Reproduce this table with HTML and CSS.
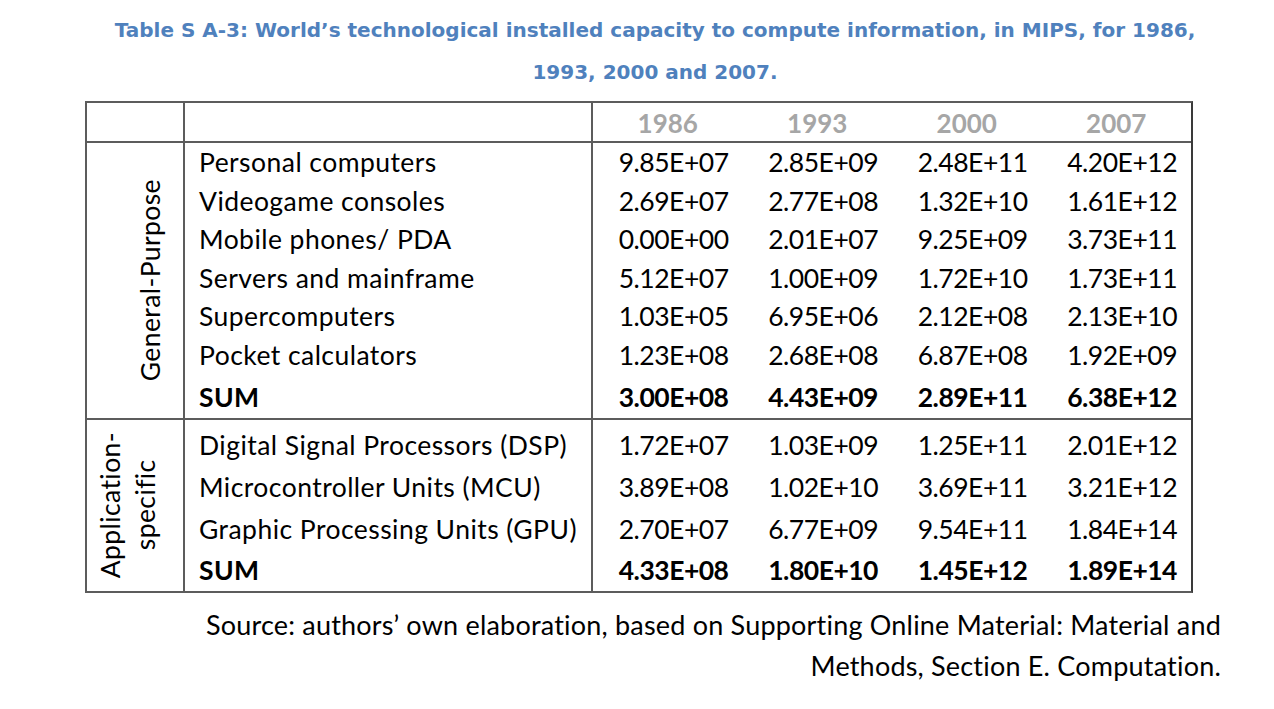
FILE: index.html
```html
<!DOCTYPE html>
<html>
<head>
<meta charset="utf-8">
<link rel="stylesheet" href="styles.css">
</head>
<body>
<div class="page">
  <h1 class="title">Table S A-3: World’s technological installed capacity to compute information, in MIPS, for 1986,<br>1993, 2000 and 2007.</h1>
  <div class="table">
    <div class="row head">
      <div class="c-group"></div>
      <div class="c-label"></div>
      <div class="c-data">
        <span class="year">1986</span><span class="year">1993</span><span class="year">2000</span><span class="year">2007</span>
      </div>
    </div>
    <div class="section s1">
      <div class="c-group"><span class="vlabel">General-Purpose</span></div>
      <div class="c-label">
        <div class="r">Personal computers</div>
        <div class="r">Videogame consoles</div>
        <div class="r">Mobile phones/ PDA</div>
        <div class="r">Servers and mainframe</div>
        <div class="r">Supercomputers</div>
        <div class="r">Pocket calculators</div>
        <div class="r sum">SUM</div>
      </div>
      <div class="c-data">
        <div class="r"><span>9.85E+07</span><span>2.85E+09</span><span>2.48E+11</span><span>4.20E+12</span></div>
        <div class="r"><span>2.69E+07</span><span>2.77E+08</span><span>1.32E+10</span><span>1.61E+12</span></div>
        <div class="r"><span>0.00E+00</span><span>2.01E+07</span><span>9.25E+09</span><span>3.73E+11</span></div>
        <div class="r"><span>5.12E+07</span><span>1.00E+09</span><span>1.72E+10</span><span>1.73E+11</span></div>
        <div class="r"><span>1.03E+05</span><span>6.95E+06</span><span>2.12E+08</span><span>2.13E+10</span></div>
        <div class="r"><span>1.23E+08</span><span>2.68E+08</span><span>6.87E+08</span><span>1.92E+09</span></div>
        <div class="r sum"><span>3.00E+08</span><span>4.43E+09</span><span>2.89E+11</span><span>6.38E+12</span></div>
      </div>
    </div>
    <div class="section s2">
      <div class="c-group"><span class="vlabel">Application-<br>specific</span></div>
      <div class="c-label">
        <div class="r">Digital Signal Processors (DSP)</div>
        <div class="r">Microcontroller Units (MCU)</div>
        <div class="r">Graphic Processing Units (GPU)</div>
        <div class="r sum">SUM</div>
      </div>
      <div class="c-data">
        <div class="r"><span>1.72E+07</span><span>1.03E+09</span><span>1.25E+11</span><span>2.01E+12</span></div>
        <div class="r"><span>3.89E+08</span><span>1.02E+10</span><span>3.69E+11</span><span>3.21E+12</span></div>
        <div class="r"><span>2.70E+07</span><span>6.77E+09</span><span>9.54E+11</span><span>1.84E+14</span></div>
        <div class="r sum"><span>4.33E+08</span><span>1.80E+10</span><span>1.45E+12</span><span>1.89E+14</span></div>
      </div>
    </div>
  </div>
  <p class="source">Source: authors’ own elaboration, based on Supporting Online Material: Material and<br>Methods, Section E. Computation.</p>
</div>
</body>
</html>
```

FILE: styles.css
```css
html, body {
  margin: 0;
  padding: 0;
  background: #ffffff;
}
.page {
  width: 1274px;
  height: 709px;
  overflow: hidden;
  font-family: "Lato", "Open Sans", sans-serif;
  color: #000;
}
.title {
  margin: 0;
  padding: 9px 0 0 0;
  width: 1310px;
  text-align: center;
  font-family: "DejaVu Sans", sans-serif;
  font-weight: bold;
  font-size: 20px;
  line-height: 42px;
  color: #4f81bd;
  height: 84px;
}
.table {
  margin: 8px 0 0 85px;
  width: 1108px;
  border: 2px solid #5c5c5c;
  border-right-color: #3a3a3a;
  box-sizing: border-box;
  font-size: 26.5px;
}
.row, .section {
  display: flex;
}
.head {
  height: 38px;
  border-bottom: 2px solid #5c5c5c;
}
.s1 {
  border-bottom: 2px solid #5c5c5c;
}
.c-group {
  box-sizing: border-box;
  width: 98px;
  flex: none;
  border-right: 2px solid #5c5c5c;
  display: flex;
  align-items: center;
  justify-content: flex-end;
  padding-right: 20px;
}
.head .c-group {
  padding-right: 0;
}
.c-label {
  flex: none;
  border-right: 2px solid #5c5c5c;
  padding-left: 14px;
  box-sizing: border-box;
  width: 408px;
  letter-spacing: 0.45px;
}
.c-data {
  flex: 1;
}
.head .c-data {
  display: flex;
}
.year {
  flex: 1;
  text-align: center;
  font-weight: bold;
  color: #a6a6a6;
  font-size: 26px;
  line-height: 40px;
}
.c-data .r {
  display: flex;
}
.c-data .r span {
  flex: 1;
  box-sizing: border-box;
  text-align: right;
  padding-right: 14px;
  letter-spacing: -0.5px;
}
.sum {
  font-weight: bold;
}
.s1 .r {
  height: 38.5px;
  line-height: 38.5px;
}
.s1 .r.sum {
  height: 44px;
  line-height: 40px;
  padding-top: 3px;
  box-sizing: border-box;
}
.s2 .c-label, .s2 .c-data {
  padding-top: 4px;
}
.s2 .r {
  height: 42px;
  line-height: 42px;
}
.s2 .r.sum {
  height: 41px;
  line-height: 40px;
}
.vlabel {
  writing-mode: vertical-rl;
  transform: rotate(180deg);
  text-align: center;
  line-height: 25px;
  letter-spacing: 0.4px;
}
.s2 .vlabel {
  line-height: 35px;
}
.source {
  margin: 0;
  padding: 11px 53px 0 0;
  text-align: right;
  font-size: 27px;
  line-height: 41px;
  letter-spacing: 0.2px;
}
```
